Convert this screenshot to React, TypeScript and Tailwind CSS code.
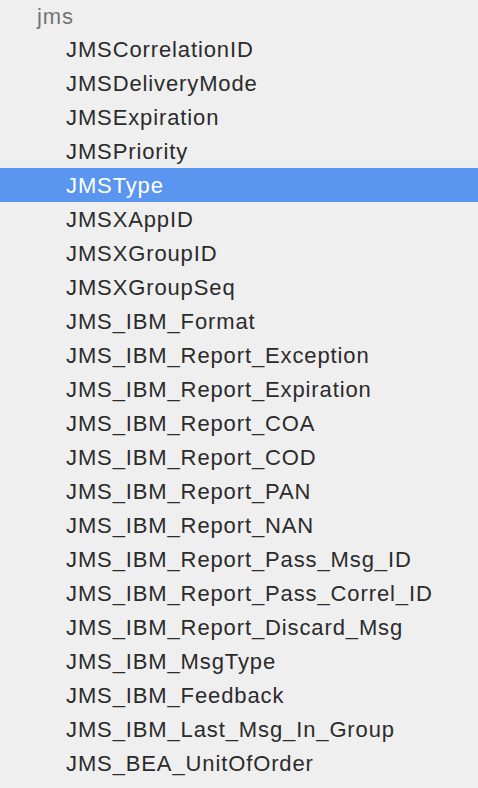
const items = [
  "JMSCorrelationID",
  "JMSDeliveryMode",
  "JMSExpiration",
  "JMSPriority",
  "JMSType",
  "JMSXAppID",
  "JMSXGroupID",
  "JMSXGroupSeq",
  "JMS_IBM_Format",
  "JMS_IBM_Report_Exception",
  "JMS_IBM_Report_Expiration",
  "JMS_IBM_Report_COA",
  "JMS_IBM_Report_COD",
  "JMS_IBM_Report_PAN",
  "JMS_IBM_Report_NAN",
  "JMS_IBM_Report_Pass_Msg_ID",
  "JMS_IBM_Report_Pass_Correl_ID",
  "JMS_IBM_Report_Discard_Msg",
  "JMS_IBM_MsgType",
  "JMS_IBM_Feedback",
  "JMS_IBM_Last_Msg_In_Group",
  "JMS_BEA_UnitOfOrder",
];

export default function App() {
  return (
    <div className="min-h-screen w-full bg-[#efefef] font-['Liberation_Sans',Arial,sans-serif] text-[22px] tracking-[0.04em]">
      {/* group header */}
      <div className="h-[32px] flex items-center pl-[37px] text-[#747474]">jms</div>

      {items.map((name) => {
        const selected = name === "JMSType";
        return (
          <div
            key={name}
            className={
              selected
                ? "h-[34px] flex items-center pl-[66px] bg-[#5a95f0] text-white"
                : "h-[34px] flex items-center pl-[66px] text-[#2b2b2b]"
            }
          >
            {name}
          </div>
        );
      })}
    </div>
  );
}
